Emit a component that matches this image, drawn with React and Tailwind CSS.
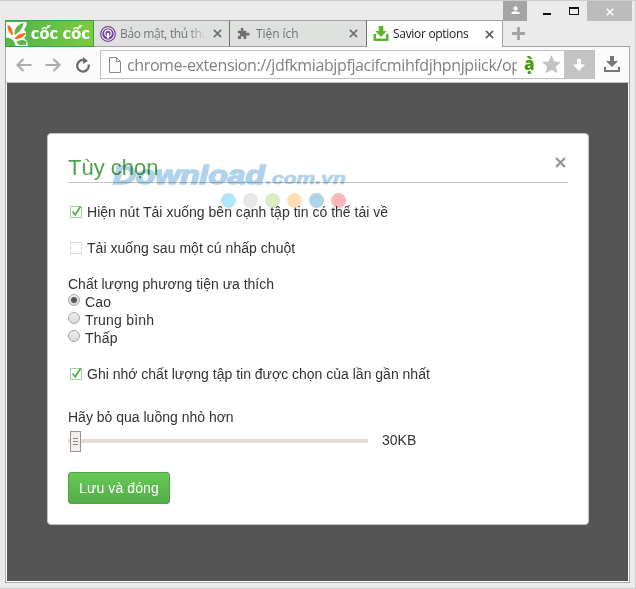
import React from "react";

const UI = "font-['Open_Sans','Noto_Sans',sans-serif]";

function CloseGlyph({ className }) {
  return (
    <svg viewBox="0 0 10 10" className={className} fill="none" stroke="currentColor" strokeWidth="1.900">
      <path d="M1 1 9 9M9 1 1 9" />
    </svg>
  );
}

function CocCocLogo() {
  return (
    <div className="flex h-[27px] w-[89px] shrink-0 border border-[#35a349] bg-gradient-to-r from-[#43b649] to-[#7fca3e]">
      <svg viewBox="0 0 23 25" className="h-[25px] w-[23px] shrink-0">
        <path d="M0 1H20L21 3 18 9 20 11 20 15 18 17 21 20 22 25H0Z" fill="#fff" />
        <path d="M1.500 4C4 4 7 8 7 14.500 3.500 13 1 8 1.500 4Z" fill="#f37021" />
        <path d="M8.500 14C8 8 11 3.500 17.500 2 17.500 6 13 12 8.500 14Z" fill="#57b947" />
        <path d="M8.500 18C10 14.500 15 11.500 20 12 18.500 16 13 18.500 8.500 18Z" fill="#f37021" />
        <path d="M10.500 20.500C14 18.500 18 18.500 20.500 20.500L20 24H13Z" fill="#57b947" />
        <path d="M0 17C5 16 9 20 9.500 25H0Z" fill="#57b947" />
      </svg>
      <span className="ml-[2px] mt-px whitespace-nowrap font-['Lato','Open_Sans',sans-serif] text-[17px] font-extrabold leading-[21px] tracking-[0.400px] text-white">
        cốc cốc
      </span>
    </div>
  );
}

function TabBar() {
  return (
    <div className="flex h-[27px] items-stretch pl-[5px]">
      <CocCocLogo />
      <div className={`${UI} flex w-[136px] shrink-0 items-center border-y border-r border-t-[#a2a2a2] border-b-[#a2a2a2] border-r-[#707070] bg-[#dfe1df] pl-[6px] pr-[7px] text-[12px] text-[#707173]`}>
        <svg viewBox="0 0 16 16" className="h-4 w-4 shrink-0">
          <circle cx="8" cy="8" r="7.300" fill="#fff" stroke="#74459b" strokeWidth="1.300" />
          <circle cx="8" cy="8" r="5.800" fill="#74459b" />
          <circle cx="8" cy="7.300" r="3.200" fill="none" stroke="#fff" strokeWidth="1.200" />
          <path d="M8 7V12.500" stroke="#fff" strokeWidth="2" />
        </svg>
        <span className="ml-1 w-[86px] overflow-hidden whitespace-nowrap bg-gradient-to-r from-[#707173] from-80% to-transparent bg-clip-text tracking-[-0.350px] text-transparent">
          Bảo mật, thủ thuật
        </span>
        <CloseGlyph className="ml-auto h-[9px] w-[9px] shrink-0" />
      </div>
      <div className={`${UI} flex w-[137px] shrink-0 items-center border-y border-r border-t-[#a2a2a2] border-b-[#a2a2a2] border-r-[#707070] bg-[#dfe1df] pl-[7px] pr-[8px] text-[12px] text-[#707173]`}>
        <svg viewBox="0 0 14 14" className="h-[13px] w-[13px] shrink-0" fill="#707070">
          <path d="M1 4H4.500C3.500 2 4 .8 5.500 .8S7.500 2 6.500 4H10V6.800C12 5.800 13.500 6.300 13.500 7.800S12 9.800 10 8.800V13H7C7.800 11 7 10 5.700 10S3.700 11 4.500 13H1V9.500C2.800 10 3.500 9 3.500 8.200S2.800 6.400 1 7Z" />
        </svg>
        <span className="ml-[6px] whitespace-nowrap tracking-[-0.050px]">Tiện ích</span>
        <CloseGlyph className="ml-auto h-[9px] w-[9px] shrink-0" />
      </div>
      <div className={`${UI} flex w-[136px] shrink-0 items-center border-t border-r border-[#a2a2a2] bg-white pl-[6px] pr-[8px] text-[12px] text-[#202020]`}>
        <svg viewBox="0 0 16 16" className="h-4 w-4 shrink-0">
          <path d="M.5 8H3V12.500H13V8H15.500V15H.5Z" fill="#58b62c" />
          <path d="M5.700 0H10.300V5H13.800L8 11 2.200 5H5.700Z" fill="#58b62c" />
        </svg>
        <span className="ml-1 whitespace-nowrap tracking-[-0.300px]">Savior options</span>
        <CloseGlyph className="ml-auto h-[9px] w-[9px] shrink-0 text-[#606060]" />
      </div>
      <div className="mr-[5px] flex flex-1 items-center border-b border-[#a2a2a2] pl-[9px]">
        <svg viewBox="0 0 14 14" className="h-[13px] w-[13px]" stroke="#a3a3a3" strokeWidth="3">
          <path d="M7 0V14M0 7H14" />
        </svg>
      </div>
    </div>
  );
}

function WindowControls() {
  return (
    <div className="flex h-5 justify-end pr-[3px]">
      <div className="flex w-6 items-center justify-center bg-[#a5a5a5]">
        <svg viewBox="0 0 10 10" className="mb-[2px] h-[9px] w-[9px]" fill="#fff">
          <circle cx="5" cy="2.700" r="2.300" />
          <path d="M.5 9V7.700Q.5 6 3 6H7Q9.500 6 9.500 7.700V9Z" />
        </svg>
      </div>
      <div className="flex w-[60px] items-center pl-[16px]">
        <div className="mt-[6px] h-[2px] w-2 bg-[#111]" />
        <div className="ml-[18px] h-2 w-[10px] border border-t-2 border-[#111]" />
      </div>
      <div className="flex w-[45px] items-center justify-center bg-[#bcbcbc]">
        <CloseGlyph className="mt-[2px] h-2 w-2 text-white" />
      </div>
    </div>
  );
}

function Toolbar() {
  return (
    <div className="flex h-[36px] shrink-0 items-center border-b border-[#c4c4c4] bg-[#fbfbfb] pl-[10px]">
      <svg viewBox="0 0 16 16" className="h-4 w-4" fill="none" stroke="#acacac" strokeWidth="2.200">
        <path d="M15.500 8H2M7.500 2 1.500 8 7.500 14" />
      </svg>
      <svg viewBox="0 0 16 16" className="ml-[13px] h-4 w-4" fill="none" stroke="#acacac" strokeWidth="2.200">
        <path d="M.5 8H14M8.500 2 14.500 8 8.500 14" />
      </svg>
      <svg viewBox="0 0 16 16" className="ml-[14px] h-4 w-4" fill="none" stroke="#6c6c6c" strokeWidth="2.300">
        <path d="M13.600 7.500A5.800 5.800 0 1 1 9.500 3.200" />
        <path d="M8 0V7L13 4Z" fill="#6c6c6c" stroke="none" />
      </svg>
      <div className="ml-[9px] flex h-[29px] w-[495px] items-center border border-[#c0c0c0] bg-white pl-2">
        <svg viewBox="0 0 12 16" className="h-4 w-[12px] shrink-0" fill="#fafafa" stroke="#8b8b8b">
          <path d="M.5 .5H7.500L11.500 4.500V15.500H.5ZM7.500 .5V4.500H11.500" />
        </svg>
        <span className={`${UI} ml-[6px] w-[390px] shrink-0 overflow-hidden whitespace-nowrap text-[16px] leading-[26px] tracking-[-0.380px] text-[#818181]`}>
          chrome-extension://jdfkmiabjpfjacifcmihfdjhpnjpiick/options.html
        </span>
        <span className="mb-[2px] ml-[7px] w-[11px] shrink-0 font-['Open_Sans',sans-serif] text-[17px] font-extrabold leading-6 text-[#47a10d]">ạ̀</span>
        <svg viewBox="0 0 18 18" className="ml-[7px] h-[19px] w-[19px] shrink-0" fill="#c2c2c2">
          <path d="M9 0 11.600 6.200 18 6.700 13.100 11 14.700 17.500 9 14 3.300 17.500 4.900 11 0 6.700 6.400 6.200Z" />
        </svg>
        <div className="ml-auto flex h-[27px] w-[30px] shrink-0 items-center justify-center bg-[#c4c4c4]">
          <svg viewBox="0 0 14 14" className="h-[14px] w-[14px]" fill="#fff">
            <path d="M5 1H9V6.500H13L7 13 1 6.500H5Z" />
          </svg>
        </div>
      </div>
      <svg viewBox="0 0 16 17" className="ml-[9px] h-[17px] w-4" fill="#777">
        <path d="M6 0H10V5H14L8 11 2 5H6Z" />
        <path d="M0 11H2V14H14V11H16V16H0Z" />
      </svg>
    </div>
  );
}

function Check({ on }) {
  return (
    <span className={`relative mr-[5px] ml-[2px] block h-3 w-3 shrink-0 border bg-white ${on ? "border-[#a5d3a0]" : "border-[#dcdcdc]"}`}>
      {on && (
        <svg viewBox="0 0 12 12" className="absolute -left-px -top-[2px] h-3 w-3" fill="none" stroke="#4fb54a" strokeWidth="1.800">
          <path d="M2.500 6.500 5.200 9.800 10.500 1.500" />
        </svg>
      )}
    </span>
  );
}

function Radio({ label, on }) {
  return (
    <label className="flex h-[18px] items-center">
      <span className="mr-[5px] mb-[4px] flex h-3 w-3 items-center justify-center rounded-full border border-[#a9a9a9] bg-gradient-to-b from-[#eee] to-[#d8d8d8]">
        {on && <span className="h-[6px] w-[6px] rounded-full bg-[#555]" />}
      </span>
      <span className="tracking-[0.200px]">{label}</span>
    </label>
  );
}

function Watermark() {
  const dots = ["bg-[#b0e6fa]", "bg-[#e7e7e7]", "bg-[#d9edc2]", "bg-[#fee0b4]", "bg-[#b0d2ea]", "bg-[#fab6bb]"];
  return (
    <div className="pointer-events-none absolute left-[64px] top-[28px] mix-blend-multiply">
      <svg width="240" height="28" viewBox="0 0 240 28" fill="#b0d2ea" stroke="#b0d2ea" fontFamily="'Liberation Sans', Arial, sans-serif" fontStyle="italic" fontWeight="bold">
        <text x="1" y="22" fontSize="25" strokeWidth="1.600" textLength="152" lengthAdjust="spacingAndGlyphs">Download</text>
        <text x="154" y="22" fontSize="17" strokeWidth=".7" textLength="80" lengthAdjust="spacingAndGlyphs">.com.vn</text>
      </svg>
      <div className="ml-[109px] mt-[3px] flex gap-[7px]">
        {dots.map((d) => (
          <span key={d} className={`h-[15px] w-[15px] rounded-full ${d}`} />
        ))}
      </div>
    </div>
  );
}

function OptionsDialog() {
  return (
    <div className="relative ml-10 mt-[50px] h-[392px] w-[542px] rounded-[4px] border border-[#c4c4c4] bg-white px-5 font-['Liberation_Sans',Arial,sans-serif] text-[14px] leading-[18px] text-[#333]">
      <div className="flex h-[49px] justify-between border-b border-[#c6c6c6] pt-[21px]">
        <h1 className="whitespace-nowrap text-[22px] leading-[26px] text-[#4fa34b]">Tùy chọn</h1>
        <CloseGlyph className="mr-[2px] mt-[2px] h-[11px] w-[11px] text-[#8e9792]" />
      </div>
      <label className="mt-5 flex h-[18px] items-center whitespace-nowrap">
        <Check on />
        <span className="tracking-[0.020px]">Hiện nút Tải xuống bên cạnh tập tin có thể tải về</span>
      </label>
      <label className="mt-[18px] flex h-[18px] items-center whitespace-nowrap">
        <Check />
        <span className="tracking-[0.040px]">Tải xuống sau một cú nhấp chuột</span>
      </label>
      <p className="mt-[18px]">Chất lượng phương tiện ưa thích</p>
      <Radio label="Cao" on />
      <Radio label="Trung bình" />
      <Radio label="Thấp" />
      <label className="mt-[18px] flex h-[18px] items-center whitespace-nowrap">
        <Check on />
        <span>Ghi nhớ chất lượng tập tin được chọn của lần gần nhất</span>
      </label>
      <p className="mt-[25px]">Hãy bỏ qua luồng nhỏ hơn</p>
      <div className="mt-[4px] flex h-[22px] items-center">
        <div className="flex h-1 w-[300px] items-center bg-[#e2ddd9] pl-[2px]">
          <div className="flex h-[21px] w-[11px] flex-col items-center justify-center gap-[2px] border border-[#9b928b] bg-[#f2efec]">
            <span className="h-px w-[5px] bg-[#8d857f]" />
            <span className="h-px w-[5px] bg-[#8d857f]" />
            <span className="h-px w-[5px] bg-[#8d857f]" />
          </div>
        </div>
        <span className="mb-[2px] ml-[14px]">30KB</span>
      </div>
      <button className="mt-5 flex h-8 w-[102px] items-center justify-center whitespace-nowrap rounded-[3px] border border-[#4aa546] bg-gradient-to-b from-[#67c957] to-[#55ad49] tracking-[0.100px] text-white">
        Lưu và đóng
      </button>
      <Watermark />
    </div>
  );
}

export default function App() {
  return (
    <div className="flex h-[589px] w-[636px] flex-col overflow-hidden border-t border-r border-b border-[#cdcdcd] bg-[#ebebeb]">
      <WindowControls />
      <div className="-mt-px">
        <TabBar />
      </div>
      <div className="ml-[5px] flex h-[536px] w-[625px] flex-col border border-t-0 border-[#acacac] bg-white px-px pb-px">
        <div className="-mx-px">
          <Toolbar />
        </div>
        <div className="flex-1 bg-[#555]">
          <OptionsDialog />
        </div>
      </div>
    </div>
  );
}
